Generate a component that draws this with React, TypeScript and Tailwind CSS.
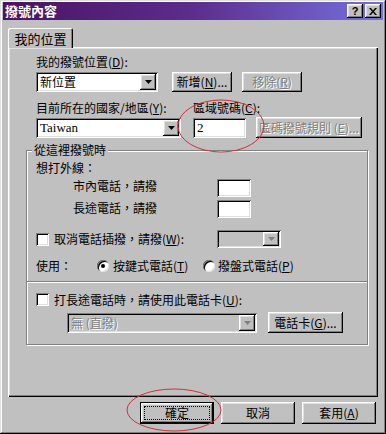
import React from 'react';

const raised =
  'shadow-[inset_-1px_-1px_#000,inset_1px_1px_#fff,inset_-2px_-2px_#808080,inset_2px_2px_#dfdfdf]';
const sunken =
  'shadow-[inset_1px_1px_#808080,inset_-1px_-1px_#fff,inset_2px_2px_#000,inset_-2px_-2px_#dfdfdf]';
const dimText = 'text-[#808080] [text-shadow:1px_1px_#fff]';

// underlined accelerator letter
const U: React.FC<{ c: string }> = ({ c }) => <span className="underline underline-offset-1">{c}</span>;

const Arrow: React.FC<{ dim?: boolean }> = ({ dim }) => (
  <svg width="7" height="4" viewBox="0 0 7 4">
    <polygon points="0,0 7,0 3.5,4" fill={dim ? '#808080' : '#000'} />
  </svg>
);

const Combo: React.FC<{ className: string; children?: React.ReactNode; dim?: boolean }> = ({
  className,
  children,
  dim,
}) => (
  <div className={`flex items-center p-[2px] ${sunken} ${dim ? 'bg-[#c0c0c0]' : 'bg-white'} ${className}`}>
    <div className={`flex-1 pl-[2px] whitespace-nowrap leading-[16px] ${dim ? dimText : ''}`}>{children}</div>
    <div className={`w-[16px] self-stretch flex items-center justify-center bg-[#c0c0c0] ${raised}`}>
      <Arrow dim={dim} />
    </div>
  </div>
);

const Btn: React.FC<{ className: string; children: React.ReactNode; dim?: boolean }> = ({
  className,
  children,
  dim,
}) => (
  <div className={`flex items-center justify-center bg-[#c0c0c0] ${raised} ${dim ? dimText : ''} ${className}`}>
    {children}
  </div>
);

const Check: React.FC = () => <div className={`w-[13px] h-[13px] shrink-0 bg-white ${sunken}`} />;

const Radio: React.FC<{ on?: boolean }> = ({ on }) => (
  <div
    className={`w-[12px] h-[12px] shrink-0 rounded-full bg-white flex items-center justify-center shadow-[inset_1px_1px_#808080,inset_-1px_-1px_#dfdfdf,inset_2px_2px_#000]`}
  >
    {on && <div className="w-[4px] h-[4px] rounded-full bg-black" />}
  </div>
);

export default function App() {
  return (
    <div className="relative w-[386px] h-[434px] bg-[#c0c0c0] pt-[2px] px-[3px] text-black text-[12px] leading-[14px] font-['Noto_Sans_CJK_TC','Noto_Sans',sans-serif] shadow-[inset_-1px_-1px_#000,inset_1px_1px_#dfdfdf,inset_-2px_-2px_#808080,inset_2px_2px_#fff]">
      {/* title bar */}
      <div className="h-[18px] flex items-center pl-[2px] pr-[2px] bg-gradient-to-r from-[#4a1262] via-[#5a2e8c] to-[#7670e0]">
        <span className="text-white text-[13px] font-bold">撥號內容</span>
        <div className="ml-auto flex gap-[2px]">
          <div className={`w-[16px] h-[14px] flex items-center justify-center bg-[#c0c0c0] ${raised}`}>
            <span className="text-[11px] font-bold leading-none font-['Liberation_Sans',sans-serif]">?</span>
          </div>
          <div className={`w-[16px] h-[14px] flex items-center justify-center bg-[#c0c0c0] ${raised}`}>
            <svg width="8" height="7" viewBox="0 0 8 7">
              <path d="M0 0h2l2 2.5L6 0h2L5 3.5 8 7H6L4 4.5 2 7H0l3-3.5z" fill="#000" />
            </svg>
          </div>
        </div>
      </div>

      {/* tab */}
      <div className="ml-[5px] mt-[8px] relative z-10 -mb-[1px] w-[65px] h-[20px] bg-[#c0c0c0] rounded-t-[2px] flex items-center justify-center shadow-[inset_1px_1px_#fff,inset_-1px_0_#000,inset_-2px_0_#808080]">
        <span className="text-[13px] leading-[14px] pt-[1px]">我的位置</span>
      </div>

      {/* tab panel */}
      <div className="ml-[5px] w-[370px] h-[350px] pl-[18px] pt-[8px] shadow-[inset_1px_1px_#fff,inset_-1px_-1px_#000,inset_-2px_-2px_#808080,inset_2px_2px_#dfdfdf]">
        <div className="ml-[10px] h-[14px]">
          我的撥號位置(<U c="D" />):
        </div>
        <div className="mt-[3px] flex items-center">
          <Combo className="ml-[10px] w-[122px] h-[20px]">新位置</Combo>
          <Btn className="ml-[14px] w-[60px] h-[20px]">
            新增(<U c="N" />)...
          </Btn>
          <Btn className="ml-[10px] w-[60px] h-[20px]" dim>
            移除(<U c="R" />)
          </Btn>
        </div>

        <div className="mt-[9px] flex h-[14px]">
          <div className="ml-[10px] w-[157px]">
            目前所在的國家/地區(<U c="Y" />):
          </div>
          <div>
            區域號碼(<U c="C" />):
          </div>
        </div>
        <div className="mt-[2px] flex items-center">
          <Combo className="ml-[10px] w-[145px] h-[20px]">
            <span className="font-['Liberation_Serif',serif] text-[13px]">Taiwan</span>
          </Combo>
          <div className={`ml-[12px] w-[53px] h-[20px] bg-white pl-[4px] flex items-center ${sunken}`}>
            <span className="font-['Liberation_Serif',serif] text-[13px]">2</span>
          </div>
          <Btn className="ml-[10px] w-[106px] h-[21px]" dim>
            區碼撥號規則 (<U c="E" />)...
          </Btn>
        </div>

        {/* group box */}
        <div className="relative mt-[12px] w-[342px] h-[195px] border border-[#808080] shadow-[inset_1px_1px_#fff,1px_1px_#fff]">
          <span className="absolute -top-[8px] left-[5px] px-[2px] bg-[#c0c0c0]">從這裡撥號時</span>

          <div className="ml-[9px] mt-[10px] h-[14px]">想打外線：</div>
          <div className="mt-[4px] flex items-center h-[18px]">
            <span className="ml-[46px] w-[144px] -mt-[4px]">市內電話，請撥</span>
            <div className={`w-[34px] h-[18px] bg-white ${sunken}`} />
          </div>
          <div className="mt-[3px] flex items-center h-[18px]">
            <span className="ml-[46px] w-[144px] -mt-[2px]">長途電話，請撥</span>
            <div className={`w-[34px] h-[18px] bg-white ${sunken}`} />
          </div>

          <div className="mt-[12px] flex items-center h-[18px]">
            <div className="ml-[9px]">
              <Check />
            </div>
            <span className="ml-[5px] w-[163px]">
              取消電話插撥，請撥(<U c="W" />):
            </span>
            <Combo className="w-[64px] h-[18px]" dim />
          </div>

          <div className="mt-[11px] flex items-center h-[14px]">
            <span className="ml-[9px] w-[61px]">使用：</span>
            <Radio on />
            <span className="ml-[4px] w-[90px]">
              按鍵式電話(<U c="T" />)
            </span>
            <Radio />
            <span className="ml-[3px]">
              撥盤式電話(<U c="P" />)
            </span>
          </div>

          <div className="mt-[8px] h-[2px] border-t border-[#808080] border-b border-b-white" />

          <div className="mt-[10px] flex items-center h-[13px]">
            <div className="ml-[9px]">
              <Check />
            </div>
            <span className="ml-[5px]">
              打長途電話時，請使用此電話卡(<U c="U" />):
            </span>
          </div>
          <div className="mt-[6px] flex items-center">
            <Combo className="ml-[40px] w-[190px] h-[20px]" dim>
              無 (直撥)
            </Combo>
            <Btn className="ml-[11px] w-[75px] h-[21px]">
              電話卡(<U c="G" />)...
            </Btn>
          </div>
        </div>
      </div>

      {/* bottom buttons */}
      <div className="mt-[5px] flex justify-end gap-[7px] pr-[7px]">
        <div className="w-[74px] h-[22px] border border-black">
          <div className={`w-full h-full p-[3px] ${raised}`}>
            <div className="w-full h-full border border-dotted border-black flex items-center justify-center">
              確定
            </div>
          </div>
        </div>
        <Btn className="w-[74px] h-[22px]">取消</Btn>
        <Btn className="w-[74px] h-[22px]">
          套用(<U c="A" />)
        </Btn>
      </div>

      {/* red annotation circles */}
      <svg className="absolute inset-0 pointer-events-none" width="386" height="434">
        <ellipse cx="221" cy="126" rx="43" ry="26" fill="none" stroke="#d0303c" strokeWidth="1" />
        <ellipse cx="174" cy="410" rx="47" ry="21" fill="none" stroke="#d0303c" strokeWidth="1" />
      </svg>
    </div>
  );
}
